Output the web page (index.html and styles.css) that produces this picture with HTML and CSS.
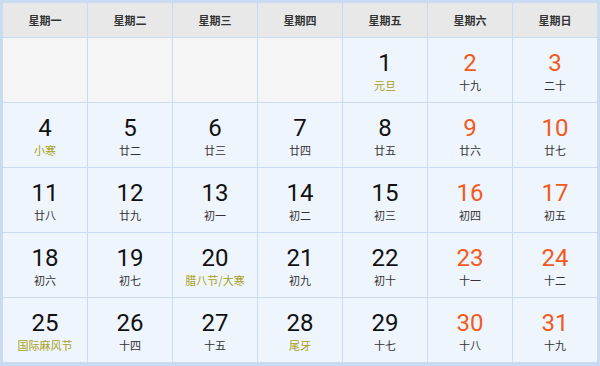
FILE: index.html
```html
<!DOCTYPE html>
<html lang="zh">
<head>
<meta charset="utf-8">
<link rel="stylesheet" href="styles.css">
</head>
<body>
<div class="cal">
  <div class="hd">星期一</div><div class="hd">星期二</div><div class="hd">星期三</div><div class="hd">星期四</div><div class="hd">星期五</div><div class="hd">星期六</div><div class="hd">星期日</div>

  <div class="empty"></div><div class="empty"></div><div class="empty"></div><div class="empty"></div>
  <div class="day"><span class="num">1</span><span class="lun fest">元旦</span></div>
  <div class="day we"><span class="num">2</span><span class="lun">十九</span></div>
  <div class="day we"><span class="num">3</span><span class="lun">二十</span></div>

  <div class="day"><span class="num">4</span><span class="lun fest">小寒</span></div>
  <div class="day"><span class="num">5</span><span class="lun">廿二</span></div>
  <div class="day"><span class="num">6</span><span class="lun">廿三</span></div>
  <div class="day"><span class="num">7</span><span class="lun">廿四</span></div>
  <div class="day"><span class="num">8</span><span class="lun">廿五</span></div>
  <div class="day we"><span class="num">9</span><span class="lun">廿六</span></div>
  <div class="day we"><span class="num">10</span><span class="lun">廿七</span></div>

  <div class="day"><span class="num">11</span><span class="lun">廿八</span></div>
  <div class="day"><span class="num">12</span><span class="lun">廿九</span></div>
  <div class="day"><span class="num">13</span><span class="lun">初一</span></div>
  <div class="day"><span class="num">14</span><span class="lun">初二</span></div>
  <div class="day"><span class="num">15</span><span class="lun">初三</span></div>
  <div class="day we"><span class="num">16</span><span class="lun">初四</span></div>
  <div class="day we"><span class="num">17</span><span class="lun">初五</span></div>

  <div class="day"><span class="num">18</span><span class="lun">初六</span></div>
  <div class="day"><span class="num">19</span><span class="lun">初七</span></div>
  <div class="day"><span class="num">20</span><span class="lun fest">腊八节/大寒</span></div>
  <div class="day"><span class="num">21</span><span class="lun">初九</span></div>
  <div class="day"><span class="num">22</span><span class="lun">初十</span></div>
  <div class="day we"><span class="num">23</span><span class="lun">十一</span></div>
  <div class="day we"><span class="num">24</span><span class="lun">十二</span></div>

  <div class="day"><span class="num">25</span><span class="lun fest">国际麻风节</span></div>
  <div class="day"><span class="num">26</span><span class="lun">十四</span></div>
  <div class="day"><span class="num">27</span><span class="lun">十五</span></div>
  <div class="day"><span class="num">28</span><span class="lun fest">尾牙</span></div>
  <div class="day"><span class="num">29</span><span class="lun">十七</span></div>
  <div class="day we"><span class="num">30</span><span class="lun">十八</span></div>
  <div class="day we"><span class="num">31</span><span class="lun">十九</span></div>
</div>
</body>
</html>
```
FILE: styles.css
```css
html, body {
  margin: 0;
  padding: 0;
  background: #ffffff;
}
.cal {
  width: 600px;
  height: 366px;
  box-sizing: border-box;
  padding: 3px 3px 4px 3px;
  background: #c9dbf1;
  display: grid;
  grid-template-columns: repeat(7, 84px);
  grid-template-rows: 34px repeat(5, 64px);
  gap: 1px;
  font-family: "Noto Sans CJK SC", sans-serif;
}
.hd {
  background: #e8e8e8;
  color: #333;
  font-size: 11px;
  font-weight: bold;
  display: flex;
  align-items: center;
  justify-content: center;
}
.empty {
  background: #f5f5f5;
}
.day {
  background: #eef5fc;
  display: flex;
  flex-direction: column;
  align-items: center;
  padding-top: 11px;
  box-sizing: border-box;
}
.num {
  font-family: Roboto, "Noto Sans CJK SC", sans-serif;
  font-size: 24px;
  line-height: 28px;
  color: #111;
}
.we .num {
  color: #f25a22;
}
.lun {
  font-size: 11px;
  line-height: 16px;
  color: #333;
}
.lun.fest {
  color: #a8a01a;
}
```
